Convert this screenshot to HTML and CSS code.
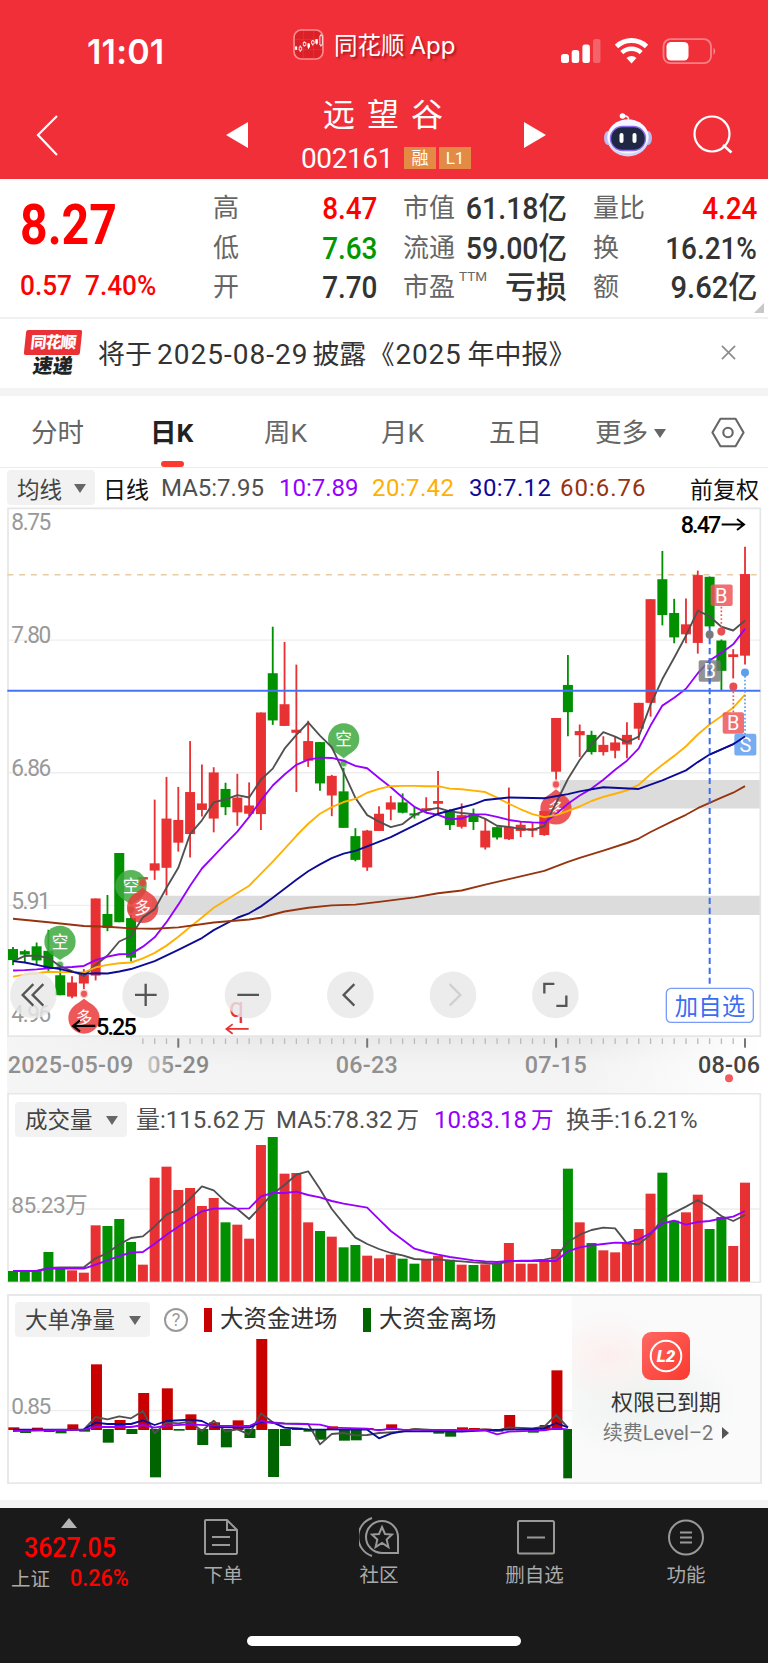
FILE: index.html
```html
<!DOCTYPE html>
<html lang="zh-CN">
<head>
    <meta charset="UTF-8">
    <meta name="viewport" content="width=device-width, initial-scale=1.0">
    <title>远望谷 002161</title>
    <link rel="stylesheet" href="styles.css">
</head>
<body>
    <header class="header">
        <div class="status-bar">
            <span class="clock">11:01</span>
            <div class="brand">
                <svg class="brand-icon" viewBox="0 0 30 30">
                    <rect x="1" y="1" width="28" height="28" rx="7" fill="#dc2028" stroke="#ff8b8d" stroke-width="1.6"/>
                    <path d="M2 10h26M2 20h26M10 2v26M20 2v26" stroke="#ec3a40" stroke-width=".6"/>
                    <path d="M3 17v3M7 16v6M11 12v5M15 14v5M19 11v5M23 10v5M27 5v12" stroke="#fff" stroke-width="1"/>
                    <path d="M2 17h2v3H2zM14 14h2.4v4H14zM21.6 10h2.4v4h-2.4z" fill="#fff"/>
                    <path d="M6 17.500h2.400v3H6zM10 13h2.400v3H10zM18 11.500h2.400v3H18zM26 6.500h2.400v9H26z" fill="#dc2028" stroke="#fff" stroke-width=".8"/>
                </svg>
                <span>同花顺<b>App</b></span>
            </div>
            <svg class="status-icons" viewBox="0 0 156 28">
                <rect x="0" y="16" width="8" height="9" rx="2.500" fill="#fff"/>
                <rect x="10.700" y="12" width="7.500" height="13" rx="2.500" fill="#fff"/>
                <rect x="21.400" y="6.500" width="7.500" height="18.500" rx="2.500" fill="#fff"/>
                <rect x="32" y="1" width="7.500" height="24" rx="2.500" fill="#fff" fill-opacity=".25"/>
                <path d="M55.500 8.500a22 22 0 0 1 30 0" fill="none" stroke="#fff" stroke-width="5"/>
                <path d="M60.800 14.600a14 14 0 0 1 19.400 0" fill="none" stroke="#fff" stroke-width="4.400"/>
                <path d="M70.500 25.500l-5-5.500a7.500 7.500 0 0 1 10 0z" fill="#fff"/>
                <rect x="102.500" y="1.200" width="47.500" height="24" rx="7" fill="none" stroke="#fff" stroke-opacity=".4" stroke-width="1.800"/>
                <rect x="105.500" y="4" width="22" height="18.500" rx="4.500" fill="#fff"/>
                <path d="M152.500 9.500q3.500 3.500 0 7.500z" fill="#fff" fill-opacity=".45"/>
            </svg>
        </div>
        <div class="title-bar">
            <svg class="back" viewBox="0 0 24 42"><path d="M22 2L3 21l19 20" fill="none" stroke="#fff" stroke-width="2.200"/></svg>
            <svg class="prev" viewBox="0 0 22 26"><path d="M22 0v26L0 13z" fill="#fff"/></svg>
            <div class="stock">
                <h1>远望谷</h1>
                <div class="code">002161 <i>融</i><i>L1</i></div>
            </div>
            <svg class="next" viewBox="0 0 22 26"><path d="M0 0v26l22-13z" fill="#fff"/></svg>
            <svg class="robot" viewBox="0 0 48 44">
                <path d="M24 8q2-5-4-5" fill="none" stroke="#e9e9ff" stroke-width="1.800"/>
                <circle cx="18.500" cy="3" r="2.800" fill="#fff"/>
                <ellipse cx="4" cy="25" rx="4" ry="7" fill="#b9baf0"/>
                <ellipse cx="44" cy="25" rx="4" ry="7" fill="#b9baf0"/>
                <ellipse cx="24" cy="25" rx="21" ry="18.500" fill="#d2d5f4"/>
                <ellipse cx="24" cy="23.500" rx="20.500" ry="17" fill="#f6f7ff"/>
                <rect x="6.500" y="13.500" width="35" height="24" rx="12" fill="#1f2744" stroke="#8c6ff0" stroke-width="1.400"/>
                <rect x="15.500" y="20" width="4" height="10" rx="2" fill="#fff"/>
                <rect x="28.500" y="20" width="4" height="10" rx="2" fill="#fff"/>
            </svg>
            <svg class="search" viewBox="0 0 42 42"><circle cx="20" cy="20" r="17.500" fill="none" stroke="#fff" stroke-width="2.200"/><path d="M31 31l8.500 7.500" stroke="#fff" stroke-width="2.600"/></svg>
        </div>
    </header>

    <section class="quote">
        <div class="price">
            <div class="last"><span class="num">8.27</span></div>
            <div class="change"><span class="num">0.57</span><span class="num">7.40%</span></div>
        </div>
        <dl class="col-a">
            <dt>高</dt><dd class="up"><span class="num">8.47</span></dd>
            <dt>低</dt><dd class="down"><span class="num">7.63</span></dd>
            <dt>开</dt><dd><span class="num">7.70</span></dd>
        </dl>
        <dl class="col-b">
            <dt>市值</dt><dd><span class="num">61.18亿</span></dd>
            <dt>流通</dt><dd><span class="num">59.00亿</span></dd>
            <dt>市盈<sup>TTM</sup></dt><dd>亏损</dd>
        </dl>
        <dl class="col-c">
            <dt>量比</dt><dd class="up"><span class="num">4.24</span></dd>
            <dt>换</dt><dd><span class="num">16.21%</span></dd>
            <dt>额</dt><dd><span class="num wide">9.62亿</span></dd>
        </dl>
    </section>

    <section class="news">
        <div class="news-logo"><b>同花顺</b><em>速递</em></div>
        <p>将于<span>2025-08-29</span>披露<span class="open">《</span><span class="year">2025</span>年中报》</p>
        <svg viewBox="0 0 16 16"><path d="M1 1l14 14M15 1L1 15" stroke="#8c8c8c" stroke-width="1.800"/></svg>
    </section>

    <nav class="tabs">
        <a>分时</a>
        <a class="active">日K</a>
        <a>周K</a>
        <a>月K</a>
        <a>五日</a>
        <a>更多<i class="caret"></i></a>
        <svg viewBox="0 0 36 32"><path d="M10 1.500h16L34.500 16 26 30.500H10L1.500 16z" fill="none" stroke="#666" stroke-width="2.200" stroke-linejoin="round"/><circle cx="18" cy="16" r="5" fill="none" stroke="#666" stroke-width="2.200"/></svg>
    </nav>

    <div class="ma-row">
        <span class="pill">均线<i class="caret"></i></span>
        <span class="black">日线</span>
        <span>MA5:7.95</span>
        <span class="ma10">10:7.89</span>
        <span class="ma20">20:7.42</span>
        <span class="ma30">30:7.12</span>
        <span class="ma60">60:6.76</span>
        <span class="black">前复权</span>
    </div>

    <svg class="kline" viewBox="0 20.3 2304 1539" preserveAspectRatio="none">
        <path d="M22 407H2281M22 792H2281M22 1177H2281" stroke="#eee" stroke-width="4"/>
        <path d="M455 1149H2281V1205H455zM1680 813H2281V896H1680z" fill="#dcdcdc"/>
        <path d="M24 24H2281V1557H24z" fill="none" stroke="#e6e6e6" stroke-width="5"/>
        <path d="M22 217H2281" stroke="#e8cba4" stroke-width="5" stroke-dasharray="18 17.400"/>
        <g class="scale">
            <text x="34" y="88" textLength="120">8.75</text>
            <text x="34" y="416" textLength="120">7.80</text>
            <text x="34" y="801" textLength="120">6.86</text>
            <text x="34" y="1187" textLength="118">5.91</text>
            <text x="34" y="1515" textLength="120">4.96</text>
        </g>
        <g id="candles"></g>
        <g id="markers"></g>
        <g id="averages"></g>
        <path d="M22 554H2281" stroke="#4573f5" stroke-width="6"/>
        <g class="trades">
            <path d="M2129 372V1415" stroke="#3b6df2" stroke-width="6" stroke-dasharray="18 11"/>
            <circle cx="2129" cy="391" r="12" fill="#7a7a7a"/>
            <rect x="2096" y="465" width="66" height="63" rx="6" fill="#777" fill-opacity=".8"/>
            <path d="M2164 310v60" stroke="#ee5a5c" stroke-width="5" stroke-dasharray="5 6"/>
            <circle cx="2164" cy="382" r="12" fill="#e94e50"/>
            <rect x="2132" y="245" width="66" height="63" rx="6" fill="#ec5659" fill-opacity=".85"/>
            <path d="M2200 545v72" stroke="#d86070" stroke-width="5" stroke-dasharray="5 6"/>
            <circle cx="2200" cy="542" r="12" fill="#e94e50"/>
            <rect x="2168" y="616" width="64" height="63" rx="6" fill="#ec5659" fill-opacity=".85"/>
            <path d="M2235 500v180" stroke="#5e9eee" stroke-width="5" stroke-dasharray="5 6"/>
            <circle cx="2235" cy="501" r="12" fill="#5e9eee"/>
            <rect x="2203" y="679" width="66" height="63" rx="6" fill="#5e9eee" fill-opacity=".85"/>
            <text x="2129" y="518">B</text>
            <text x="2164" y="298">B</text>
            <text x="2200" y="669">B</text>
            <text x="2236" y="732">S</text>
            <path d="M2129 460v72" stroke="#3b6df2" stroke-width="6" stroke-dasharray="18 11"/>
        </g>
        <path d="M2235 687L2200 709 2129 739" fill="none" stroke="#0b0b97" stroke-width="5"/>
        <g class="extreme">
            <text x="2042" y="95" textLength="122">8.47</text>
            <path d="M2165 71h66m-20-16l21 16-21 16" />
            <text x="288" y="1553" textLength="122">5.25</text>
            <path d="M286 1527h-66m20-16l-21 16 21 16" />
        </g>
        <text x="688" y="1502" class="q">q</text>
        <path d="M746 1536h-66m18-14l-19 14 19 14" fill="none" stroke="#e83133" stroke-width="5"/>
        <g class="tools">
            <ellipse cx="100" cy="1437" rx="70" ry="68"/>
            <ellipse cx="437" cy="1437" rx="70" ry="68"/>
            <ellipse cx="744" cy="1437" rx="70" ry="68"/>
            <ellipse cx="1051" cy="1437" rx="70" ry="68"/>
            <ellipse cx="1359" cy="1437" rx="70" ry="68"/>
            <ellipse cx="1666" cy="1437" rx="70" ry="68"/>
            <path d="M100 1406l-32 31 32 31M130 1406l-32 31 32 31M405 1437h65M437 1405v64M712 1437h65M1063 1406l-32 31 32 31M1663 1405h-30v28M1669 1469h30v-30"/>
            <path d="M1349 1406l32 31-32 31" class="off"/>
        </g>
        <rect x="1999" y="1418" width="261" height="99" rx="14" fill="#fff" stroke="#7a9bf8" stroke-width="4"/>
        <text x="2024" y="1494" textLength="212" class="add">加自选</text>
    </svg>

    <svg class="axis" viewBox="0 51 2304 168">
        <defs>
            <linearGradient id="axisFade" y2="1" x2="0"><stop offset="0" stop-color="#e9e9e9"/><stop offset=".5" stop-color="#f3f3f3"/><stop offset="1" stop-color="#f4f4f4"/></linearGradient>
            <linearGradient id="axisLeft"><stop offset="0" stop-color="#f5f5f5"/><stop offset="1" stop-color="#f5f5f5" stop-opacity="0"/></linearGradient>
            <linearGradient id="axisRight"><stop offset="0" stop-color="#fff" stop-opacity="0"/><stop offset="1" stop-color="#fff"/></linearGradient>
            <linearGradient id="dateFade" gradientUnits="userSpaceOnUse" x1="440" x2="530"><stop offset="0" stop-color="#ccc"/><stop offset="1" stop-color="#888"/></linearGradient>
        </defs>
        <path d="M22 51H2281V219H22z" fill="url(#axisFade)"/>
        <path d="M22 51H800V219H22z" fill="url(#axisLeft)"/>
        <path d="M1750 51H2283V219H1750z" fill="url(#axisRight)"/>
        <g id="ticks"></g>
        <text x="23" y="158" textLength="377">2025-05-09</text>
        <text x="442" y="158" textLength="186" class="fading">05-29</text>
        <text x="1007" y="158" textLength="186">06-23</text>
        <text x="1574" y="158" textLength="186">07-15</text>
        <text x="2094" y="158" textLength="186" class="today">08-06</text>
        <circle cx="2187" cy="175" r="12" fill="#f25a5c"/>
    </svg>

    <section class="panel volume">
        <div class="legend vol-legend">
            <span class="pill">成交量<i class="caret"></i></span>
            <span>量:115.62<small>万</small></span>
            <span>MA5:78.32<small>万</small></span>
            <span class="ma10">10:83.18<small>万</small></span>
            <span>换手:16.21%</span>
        </div>
        <svg viewBox="0 220 2304 570">
            <path d="M22 568H2281" stroke="#eee" stroke-width="4"/>
            <path d="M24 222H2281V788H24z" fill="none" stroke="#e8e8e8" stroke-width="5"/>
            <text x="34" y="579" textLength="229" class="scale">85.23万</text>
            <g id="volumes"></g>
        </svg>
    </section>

    <section class="panel flow">
        <div class="legend flow-legend">
            <span class="pill">大单净量<i class="caret"></i></span>
            <span class="help">?</span>
            <span class="key in">大资金进场</span>
            <span class="key out">大资金离场</span>
        </div>
        <svg viewBox="0 27 2304 570">
            <path d="M22 377H2281" stroke="#eee" stroke-width="4"/>
            <path d="M24 30H2283V595H24z" fill="none" stroke="#e8e8e8" stroke-width="6"/>
            <text x="34" y="386" textLength="120" class="scale">0.85</text>
            <g id="flows"></g>
        </svg>
        <div class="expired">
            <svg viewBox="0 0 48 48">
                <defs><linearGradient id="l2" x2="1" y2="1"><stop offset="0" stop-color="#ff6862"/><stop offset="1" stop-color="#fb392f"/></linearGradient></defs>
                <rect width="48" height="48" rx="9" fill="url(#l2)"/>
                <circle cx="24" cy="24" r="15.300" fill="none" stroke="#fff" stroke-width="2"/>
                <text x="24" y="30" text-anchor="middle">L2</text>
            </svg>
            <strong>权限已到期</strong>
            <span>续费Level–2<i></i></span>
        </div>
    </section>

    <footer class="bottom">
        <div class="index">
            <i></i>
            <div class="points"><span class="num">3627.05</span></div>
            <div class="sub">上证 <span class="num">0.26%</span></div>
        </div>
        <div class="actions">
            <a><svg viewBox="0 0 40 40"><path d="M3 3h21l10 10v23q0 1-1 1H3q-1 0-1-1V4q0-1 1-1zM24 3v10h10M9 20h18M9 28h18"/></svg>下单</a>
            <a><svg viewBox="0 0 40 40"><path d="M39 36V20a16 16 0 1 0-16 16zM13 1A20 20 0 0 0 13 39M23 10l3 7 7 .6-5.300 5 1.700 7.400-6.400-4-6.400 4 1.700-7.400-5.300-5 7-.6z"/></svg>社区</a>
            <a><svg viewBox="0 0 40 40"><rect x="3" y="4" width="36" height="32.500" rx="1.500"/><path d="M12 20.500h18"/></svg>删自选</a>
            <a><svg viewBox="0 0 40 40"><circle cx="20" cy="20.500" r="17"/><path d="M14 15.500h12M14 20.500h12M14 25.500h12"/></svg>功能</a>
        </div>
        <div class="home-bar"></div>
    </footer>

    <script src="chart.js"></script>
</body>
</html>
```
FILE: styles.css
```css
* {
    box-sizing: border-box;
}
body {
    margin: 0;
    width: 768px;
    background: #fff;
    color: #333;
    font-family: Roboto, "Noto Sans CJK SC", sans-serif;
}
h1, p, dl, dd {
    margin: 0;
}
i, em {
    font-style: normal;
}
svg {
    display: block;
    flex: none;
}
.num {
    display: inline-block;
    transform: scaleX(.9);
    transform-origin: right center;
    font-weight: 500;
}
.up {
    color: #f00;
}
.down {
    color: #009800;
}
.caret {
    display: inline-block;
    border: 6px solid transparent;
    border-top: 9px solid #666;
    border-bottom: 0;
}

/* header */
.header {
    height: 179px;
    background: #f12f38;
    color: #fff;
}
.status-bar {
    display: flex;
    height: 90px;
    padding-left: 87px;
}
.clock {
    width: 206px;
    padding-top: 30px;
    font: 600 34px/43px Inter, sans-serif;
    letter-spacing: .2px;
}
.brand {
    display: flex;
    width: 268px;
    gap: 10px;
    padding-top: 29px;
    font-size: 23.5px;
    line-height: 33px;
    text-shadow: 2px 2px 2px rgba(90, 0, 0, .45);
}
.brand b {
    margin-left: 5px;
    font: 400 24px/33px Inter, sans-serif;
}
.brand-icon {
    width: 31px;
    height: 31px;
}
.status-icons {
    width: 156px;
    height: 28px;
    margin-top: 38px;
}
.title-bar {
    display: flex;
    height: 89px;
    padding-left: 35px;
}
.back {
    width: 24px;
    height: 42px;
    margin-top: 24px;
}
.prev, .next {
    width: 22px;
    height: 26px;
    margin-top: 32px;
}
.prev {
    margin-left: 167px;
}
.stock {
    width: 276px;
    padding-left: 53px;
}
.stock h1 {
    height: 50px;
    padding-left: 22px;
    font-size: 32px;
    font-weight: 400;
    line-height: 51px;
    letter-spacing: 12px;
    white-space: nowrap;
}
.code {
    display: flex;
    align-items: center;
    height: 36px;
    font-size: 28px;
    letter-spacing: -.4px;
}
.code i {
    width: 32px;
    height: 22px;
    margin-left: 3px;
    background: #e38b45;
    font-size: 17px;
    line-height: 22px;
    text-align: center;
    letter-spacing: 0;
}
.code i:first-child {
    margin-left: 11px;
}
.robot {
    width: 48px;
    height: 44px;
    margin: 23px 0 0 58px;
}
.search {
    width: 42px;
    height: 42px;
    margin: 24px 0 0 40px;
}

/* quote */
.quote {
    position: relative;
    display: flex;
    height: 140px;
    padding-top: 10px;
    border-bottom: 2px solid #f0f0f0;
}
.quote::after {
    content: "";
    position: absolute;
    right: 4px;
    bottom: 4px;
    border-left: 10px solid transparent;
    border-bottom: 10px solid #c8c8c8;
}
.price {
    width: 213px;
    padding-left: 20px;
    color: #f00;
}
.price .num {
    transform-origin: left center;
}
.last {
    height: 66px;
    font-size: 56px;
    line-height: 73px;
}
.last .num {
    transform: scaleX(.86);
    font-weight: 700;
}
.change {
    display: flex;
    gap: 8px;
    padding-top: 10px;
    font-size: 28.5px;
    line-height: 41px;
}
.change .num {
    transform: scaleX(.92);
}
.quote dl {
    display: grid;
    grid-template-columns: auto 1fr;
    grid-auto-rows: 39.6px;
    font-size: 31px;
    line-height: 39.6px;
}
.quote dt {
    position: relative;
    color: #666;
    font-size: 26px;
}
.quote dd {
    text-align: right;
    white-space: nowrap;
    font-weight: 500;
}
.col-a {
    width: 164px;
}
.col-b {
    width: 164px;
    margin-left: 26px;
}
.col-c {
    width: 164px;
    margin-left: 26px;
}
.col-b .num {
    transform: scaleX(.92);
}
.quote .wide {
    transform: scaleX(.94);
}
.quote sup {
    position: absolute;
    top: -4px;
    left: 56px;
    font-size: 13.5px;
    line-height: 24px;
}

/* announcement */
.news {
    display: flex;
    align-items: center;
    height: 69px;
    padding-left: 25px;
}
.news-logo {
    width: 73px;
    text-align: center;
    font-weight: 900;
}
.news-logo b {
    display: block;
    width: 56px;
    height: 25px;
    border-radius: 2px;
    background: #ea3135;
    color: #fff;
    font-size: 16px;
    line-height: 25px;
    letter-spacing: -1px;
    transform: skewX(-6deg);
}
.news-logo em {
    display: block;
    width: 56px;
    height: 23px;
    color: #222;
    font-size: 20px;
    line-height: 22px;
    transform: skewX(-8deg);
}
.news p {
    width: 623px;
    padding-bottom: 3px;
    font-size: 27px;
    white-space: nowrap;
}
.news p span {
    margin: 0 4px 0 5px;
    font-size: 28px;
    letter-spacing: 1px;
}
.news p .open {
    margin: 0 0 0 2px;
    font-size: 26px;
    letter-spacing: 0;
}
.news p .year {
    margin: 0 6px 0 1px;
    letter-spacing: .8px;
}
.news svg {
    width: 15px;
    height: 15px;
    margin-bottom: 2px;
}

/* period tabs */
.tabs {
    display: grid;
    grid-template-columns: 119px 114px 117px 108px 106px 116px 36px;
    align-items: center;
    height: 80px;
    padding-left: 31px;
    border-top: 8px solid #f4f4f4;
    border-bottom: 1px solid #ececec;
    color: #666;
    font-size: 26.5px;
    line-height: 73px;
}
.tabs .active {
    position: relative;
    color: #222;
    font-weight: 700;
}
.tabs .active::after {
    content: "";
    position: absolute;
    left: 11px;
    bottom: 2px;
    width: 23px;
    height: 6px;
    border-radius: 3px;
    background: #fd3a30;
}
.tabs .caret {
    border-width: 9px 6.5px 0;
    margin: 0 0 4px 6px;
}
.tabs svg {
    width: 34px;
    height: 31px;
}
.ma-row {
    display: grid;
    grid-template-columns: 96px 58px 118px 93px 97px 91px 130px 70px;
    align-items: center;
    height: 39px;
    padding-left: 7px;
    font-size: 24px;
    white-space: nowrap;
    color: #505050;
}
.ma-row .ma20, .ma-row .ma30 {
    letter-spacing: .4px;
}
.ma-row .ma60 {
    letter-spacing: 1px;
}
.black {
    color: #111;
    font-size: 23px;
}
.ma10 {
    color: #9500ff;
}
.ma20 {
    color: #ffb000;
}
.ma30 {
    color: #0b0b97;
}
.ma60 {
    color: #963410;
}
.pill {
    display: flex;
    align-items: center;
    justify-content: space-between;
    width: 88px;
    height: 35px;
    padding: 1px 9px 0 10px;
    border-radius: 4px;
    background: #f2f2f2;
    color: #444;
    font-size: 22.500px;
}

/* charts */
.kline {
    width: 768px;
    height: 530px;
    overflow: visible;
}
.axis {
    width: 768px;
    height: 56px;
    font-size: 70px;
    font-weight: 500;
}
.axis text {
    fill: #909090;
}
.axis .fading {
    fill: url(#dateFade);
}
.axis .today {
    fill: #444;
}
.scale {
    fill: #999;
    font-size: 68px;
}
.trades text {
    fill: #fff;
    font-size: 60px;
    text-anchor: middle;
}
.extreme text {
    fill: #000;
    font-size: 70px;
    font-weight: 500;
}
.extreme path {
    fill: none;
    stroke: #000;
    stroke-width: 6;
}
.q {
    fill: #e83133;
    font-size: 78px;
}
.tools ellipse {
    fill: #e8e8e8;
    fill-opacity: .82;
}
.tools path {
    fill: none;
    stroke: #555;
    stroke-width: 7;
}
.tools .off {
    stroke: #d0d0d0;
}
.add {
    fill: #3b6df2;
    font-size: 70px;
}
.marker text {
    fill: #fff;
    font-size: 50px;
    text-anchor: middle;
}
.panel {
    position: relative;
    height: 190px;
}
.panel > svg {
    width: 768px;
    height: 190px;
}
.flow {
    margin-top: 11px;
}
.legend {
    position: absolute;
    top: 8px;
    left: 15px;
    display: grid;
    align-items: center;
    white-space: nowrap;
    font-size: 24px;
    line-height: 35px;
    color: #505050;
}
.vol-legend > span:not(.pill) {
    padding-top: 2px;
}
.legend .pill {
    width: auto;
    margin-right: 9px;
}
.legend small {
    margin-left: 4px;
    font-size: 22.5px;
}
.vol-legend {
    grid-template-columns: 121px 140px 158px 132px auto;
}
.flow-legend {
    grid-template-columns: 149px 40px 159px auto;
}
.flow-legend .pill {
    margin-right: 14px;
}
.help {
    width: 24px;
    height: 24px;
    border: 2px solid #999;
    border-radius: 50%;
    color: #999;
    font-size: 18px;
    line-height: 20px;
    text-align: center;
}
.key {
    display: flex;
    align-items: center;
    gap: 8px;
    color: #333;
    font-size: 23.5px;
}
.key::before {
    content: "";
    width: 8px;
    height: 24px;
    background: #c80000;
}
.key.out::before {
    background: #006400;
}
.expired {
    position: absolute;
    top: 2px;
    left: 572px;
    display: flex;
    flex-direction: column;
    align-items: center;
    width: 188px;
    height: 186px;
    padding: 36px 0 0;
    background: radial-gradient(60px 45px at 36px 60px, #fcefee, transparent), radial-gradient(100px 60px at 70px 105px, #edf2ef, transparent), #fafafa;
    color: #333;
}
.expired > svg {
    width: 48px;
    height: 48px;
}
.expired svg text {
    fill: #fff;
    font-size: 17px;
    font-weight: 900;
    font-style: italic;
}
.expired strong {
    font-size: 22px;
    font-weight: 400;
    line-height: 32px;
    margin-top: 7px;
}
.expired span {
    display: flex;
    align-items: center;
    font-size: 20px;
    line-height: 28px;
    color: #777;
}
.expired i {
    margin-left: 9px;
    border: 6px solid transparent;
    border-left: 7px solid #555;
    border-right: 0;
}

/* bottom bar */
.bottom {
    display: grid;
    grid-template-columns: 150px 1fr;
    grid-template-rows: 127px 1fr;
    height: 163px;
    margin-top: 16px;
    border-top: 8px solid #f4f4f4;
    background: #1a1a1a;
    color: #aaa;
    font-size: 19.500px;
}
.index {
    padding: 10px 0 0 11px;
    white-space: nowrap;
}
.index i {
    display: block;
    width: 0;
    margin-left: 50px;
    border: 8.5px solid transparent;
    border-top: 0;
    border-bottom: 10px solid #b4b4b4;
}
.index .num {
    color: #f00;
    transform-origin: left center;
}
.points {
    height: 37px;
    padding-left: 13px;
    font-size: 28px;
    line-height: 39px;
}
.points .num {
    transform: scaleX(.89);
}
.sub {
    line-height: 27px;
}
.sub .num {
    margin-left: 15px;
    font-size: 24px;
    transform: scaleX(.9);
}
.actions {
    display: grid;
    grid-template-columns: 146px 166px 145px 158px;
    height: 110px;
}
.actions a {
    display: flex;
    flex-direction: column;
    align-items: center;
    padding-top: 9px;
    line-height: 30px;
}
.actions svg {
    width: 40px;
    height: 40px;
    margin-bottom: 4px;
    fill: none;
    stroke: #999;
    stroke-width: 2;
}
.home-bar {
    grid-column: 1 / 3;
    width: 274px;
    height: 10px;
    margin: 1px 0 0 247px;
    border-radius: 5px;
    background: #fff;
}
```
FILE: chart.js
```js
const RED = '#e83133';
const GREEN = '#009000';
const STEP = 35.42;
const MA = { 5: '#505050', 10: '#9500ff', 20: '#ffb000', 30: '#0b0b97', 60: '#963410' };

const x = i => 39 + i * STEP;
const put = (id, html) => { document.getElementById(id).innerHTML = html; };
const colors = 'gggggrrrgggrrrrrrrgrrrgrrrgrggrrrggrrgrgrgrrrrrgrgrrrrrggrrggrr';
const color = i => (colors[i] === 'r' ? RED : GREEN);

// high, body top, body bottom, low
const candles = [
    [1298,1304,1336,1350],[1306,1310,1320,1342],[1285,1296,1337,1350],[1248,1309,1362,1368],[1350,1380,1438,1438],
    [1383,1401,1442,1447],[1362,1379,1404,1420],[1157,1157,1381,1395],[1147,1202,1243,1252],[1025,1025,1226,1226],
    [1205,1214,1329,1340],[1095,1095,1102,1102],[870,1055,1076,1103],[804,925,1068,1148],[833,929,995,1021],
    [700,848,970,1038],[768,881,900,919],[776,791,925,965],[821,839,892,915],[795,864,907,946],
    [820,887,911,918],[617,617,912,958],[368,503,640,653],[412,593,656,656],[478,667,676,848],
    [641,700,757,775],[703,703,823,844],[798,801,858,918],[778,846,952,952],[953,976,1045,1049],
    [958,960,1067,1077],[889,911,961,961],[859,878,899,930],[852,878,908,910],[890,910,916,925],
    [863,895,902,908],[787,874,882,912],[898,901,944,958],[881,915,949,954],[896,913,935,958],
    [925,960,1009,1015],[948,950,980,986],[835,949,985,987],[932,943,961,979],[935,953,960,979],
    [903,903,973,975],[633,633,789,812],[450,537,616,686],[652,671,683,746],[670,682,732,739],
    [686,711,732,742],[686,704,728,750],[645,682,710,750],[589,589,664,697],[288,288,589,629],
    [148,230,334,364],[287,328,399,416],[286,361,390,416],[205,218,415,446],[222,223,367,372],
    [405,408,496,553],[433,448,456,518],[136,215,452,478]
];
put('candles', candles.map(([hi, top, bottom, low], i) =>
    `<path d="M${x(i)} ${hi}V${low}" stroke="${color(i)}" stroke-width="5.500"/>` +
    `<rect x="${Math.max(x(i) - 15, 24)}" y="${top}" width="30" height="${bottom - top}" fill="${color(i)}"/>`).join(''));

// null = straight segment to the next known point
function line(values, stroke, width = 5.5) {
    const pts = values.map((v, i) => (v === null ? '' : `${x(i)},${v}`)).filter(Boolean).join(' ');
    return `<polyline points="${pts}" fill="none" stroke="${stroke}" stroke-width="${width}" stroke-linejoin="round"/>`;
}
function sparse(pairs) {
    const out = new Array(63).fill(null);
    pairs.split(' ').forEach(p => { const [i, v] = p.split(':'); out[i] = +v; });
    return out;
}

const ma5 = [1340,1324,1323,1330,1354,1368,1382,1350,1323,1282,1266,1212,1188,1126,1068,970,930,878,869,857,864,812,780,722,682,646,684,718,790,865,915,934,950,941,914,900,894,904,909,912,926,946,949,955,958,947,880,810,755,710,674,687,703,687,594,520,458,394,321,338,368,379,350];
const ma10 = [1366,1365,1363,1360,1358,1356,1353,1336,1326,1319,1318,1297,1270,1226,1175,1120,1070,1034,998,963,920,872,829,797,769,754,748,749,757,772,779,807,834,864,891,908,914,927,925,913,913,920,929,934,936,937,912,882,858,838,812,783,757,721,655,597,574,548,503,466,444,419,374];
const ma20 = [1384,1378,1374,1370,1371,1371,1372,1357,1350,1345,1343,1331,1315,1294,1268,1240,1212,1184,1163,1141,1120,1085,1050,1013,975,940,911,892,877,868,850,839,831,830,830,831,831,838,840,844,848,864,882,898,912,921,915,903,890,874,862,853,843,827,796,769,743,715,681,652,628,603,565];
const ma30 = sparse('0:1339 1:1343 2:1350 3:1357 4:1362 5:1370 6:1376 7:1374 8:1375 9:1369 10:1362 12:1339 14:1306 16:1272 17:1249 19:1213 20:1200 21:1180 22:1155 23:1129 24:1103 25:1078 26:1058 27:1040 28:1027 29:1019 30:1006 32:979 34:945 36:911 38:893 39:884 40:871 42:864 45:866 47:854 48:846 50:834 53:839 55:814 57:785 58:761 59:739 61:709 62:687');
const ma60 = sparse('0:1216 3:1226 6:1237 8:1239 10:1244 12:1245 14:1241 17:1227 20:1218 21:1213 23:1195 25:1184 27:1177 29:1175 31:1167 34:1154 36:1142 38:1134 40:1117 42:1101 45:1077 47:1051 48:1039 50:1018 52:996 53:983 54:964 56:930 57:914 58:895 60:864 61:850 62:831');
put('averages', line(ma5, MA[5]) + line(ma10, MA[10]) + line(ma20, MA[20]) + line(ma30, MA[30]) + line(ma60, MA[60]));

// 空 hangs above its candle, 多 sits below it
function marker(cx, cy, tip, word) {
    const fill = word === '空' ? '#3faa3f' : '#ec3a3c';
    const base = tip > cy ? cy + 38 : cy - 38;
    const end = tip > cy ? tip - 14 : tip + 14;
    return `<g class="marker"><g fill="${fill}" opacity=".85"><ellipse cx="${cx}" cy="${cy}" rx="47" ry="45.500"/><path d="M${cx - 25} ${base}L${cx} ${end}L${cx + 25} ${base}z"/>` +
        `<circle cx="${cx}" cy="${tip}" r="9"/><circle cx="${cx}" cy="${tip}" r="13" opacity=".3"/></g><text x="${cx}" y="${cy + 18}">${word}</text></g>`;
}
put('markers',
    marker(180, 1282, 1350, '空') + marker(252, 1504, 1434, '多') +
    marker(393, 1120, 1190, '空') + marker(428, 1183, 1112, '多') +
    marker(1031, 694, 764, '空') + marker(1668, 897, 826, '多'));

// one tick per trading day, a longer one every 16 days
let ticks = '';
for (let i = 11; i < 63; i++) {
    const major = i % 16 === 14;
    ticks += `<path d="M${x(i)} 55V${major ? 83 : 72}" stroke="${major ? '#777' : '#bbb'}" stroke-width="${major ? 6 : 4}"/>`;
}
put('ticks', ticks);

const volumes = [754,756,754,697,748,752,759,617,619,598,667,735,474,441,511,505,559,535,608,615,657,376,352,462,460,608,634,651,683,676,708,716,705,717,732,720,708,720,735,736,734,731,670,732,732,723,688,447,608,670,692,698,670,628,522,459,603,578,525,628,592,679,489];
const vol5 = [754,754,754,745,743,743,743,716,700,674,655,650,620,585,570,537,500,512,546,568,598,560,522,496,465,455,508,568,612,654,673,688,700,707,718,720,719,723,725,728,730,733,725,723,722,720,713,667,645,631,624,626,671,674,645,598,579,561,541,562,589,604,586];
const vol10 = [754,754,754,747,747,747,747,735,722,709,699,697,672,645,621,597,575,567,566,567,566,530,520,520,516,526,533,544,552,558,564,599,634,660,687,697,705,712,717,722,725,727,724,724,724,724,724,695,683,677,673,669,670,659,640,612,603,615,607,604,596,591,574];
put('volumes', volumes.map((top, i) =>
    `<rect x="${x(i) - 15}" y="${top}" width="30" height="${786 - top}" fill="${color(i)}"/>`).join('') +
    line(vol5, MA[5]) + line(vol10, MA[10]));

// above 432 is inflow, below is outflow
const flows = [427,444,428,441,445,418,440,238,473,405,447,324,577,310,437,388,480,412,487,406,459,162,576,483,428,440,464,424,467,466,429,436,418,436,431,436,446,455,427,429,431,440,390,436,443,420,256,580];
const flow5 = sparse('0:435 5:435 6:434 7:396 8:403 9:394 10:400 11:378 12:445 13:412 14:415 15:410 16:438 17:407 18:440 19:433 20:448 21:385 22:412 23:415 25:417 26:478 27:447 28:444 29:451 30:450 31:444 33:440 34:432 37:438 40:433 41:437 42:427 44:430 45:425 46:390 47:427');
const flow10 = sparse('0:434 6:433 7:413 8:417 10:417 11:406 12:420 13:408 15:404 16:408 17:426 20:428 21:411 22:412 23:428 25:433 30:434 31:460 32:446 33:439 36:439 38:440 40:436 42:434 44:432 45:430 46:414 47:427');
const flow20 = sparse('0:438 6:434 7:426 10:426 11:420 12:428 13:422 15:418 17:422 20:423 21:408 22:414 23:416 26:419 27:428 30:431 31:436 32:430 33:434 40:436 41:448 42:440 45:436 46:430 47:433');
put('flows', flows.map((v, i) =>
    `<rect x="${x(i) - 14}" y="${Math.min(v, 432)}" width="33" height="${Math.abs(v - 432) + (v < 432 ? 3 : 0)}" fill="${v < 432 ? '#c80000' : '#006400'}"/>`).join('') +
    line(flow5, MA[5]) + line(flow10, MA[30]) + line(flow20, MA[10]));
```
